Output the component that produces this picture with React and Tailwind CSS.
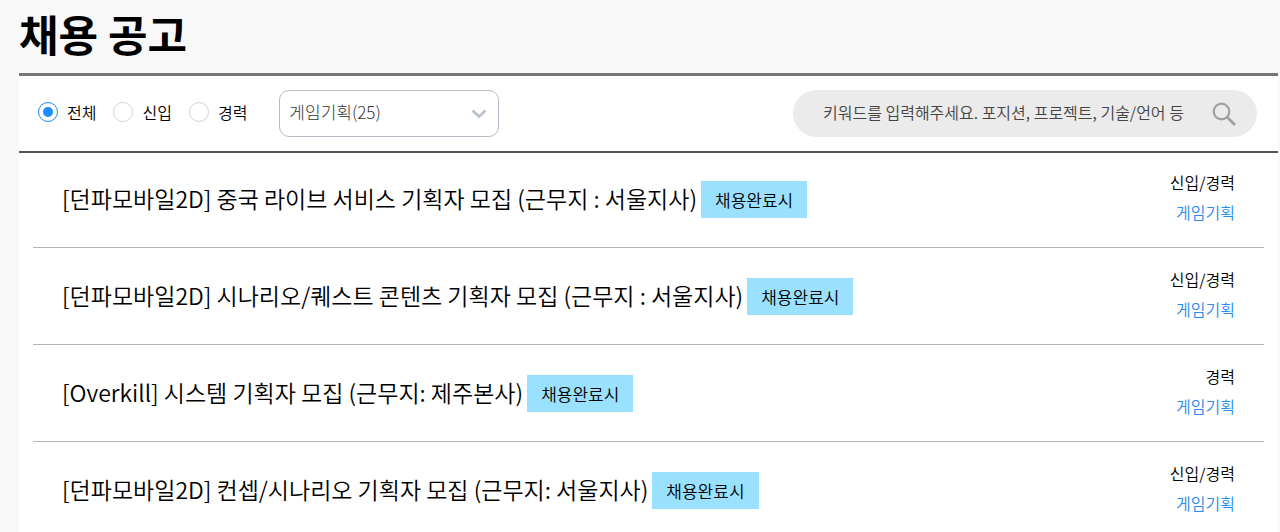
import { useState } from "react";

const careers = ["전체", "신입", "경력"];

const jobs = [
  { title: "[던파모바일2D] 중국 라이브 서비스 기획자 모집 (근무지 : 서울지사)", career: "신입/경력" },
  { title: "[던파모바일2D] 시나리오/퀘스트 콘텐츠 기획자 모집 (근무지 : 서울지사)", career: "신입/경력" },
  { title: "[Overkill] 시스템 기획자 모집 (근무지: 제주본사)", career: "경력" },
  { title: "[던파모바일2D] 컨셉/시나리오 기획자 모집 (근무지: 서울지사)", career: "신입/경력" },
];

function CareerFilter() {
  const [career, setCareer] = useState("전체");
  return (
    <div role="radiogroup" aria-label="경력 구분" className="flex items-center gap-[17px] pb-1">
      {careers.map((name) => (
        <label key={name} className="flex items-center gap-[9px] text-[16px] leading-6">
          <input
            type="radio"
            name="career"
            value={name}
            checked={career === name}
            onChange={() => setCareer(name)}
            className="grid size-[20px] appearance-none place-items-center rounded-full border border-[#d4d4d8] bg-white before:size-[10px] before:rounded-full before:content-[''] checked:border-[#1a86f5] checked:before:bg-[#1a8cff]"
          />
          {name}
        </label>
      ))}
    </div>
  );
}

function JobRow({ job }) {
  return (
    <li className="flex items-center justify-between border-b border-[#b3b3b3] pt-4 pr-[29px] pb-[15px] pl-[29px] first:pt-[14px]">
      <div className="flex items-center gap-1">
        <a href="#job" className="pb-1 text-[23px] leading-8">{job.title}</a>
        <span className="bg-[#99e1ff] px-[14px] py-[6px] text-[17px] leading-[25px]">채용완료시</span>
      </div>
      <div className="pb-[5px] text-right text-[16px] leading-[30px]">
        <p>{job.career}</p>
        <p className="text-[#2a8cf0]">게임기획</p>
      </div>
    </li>
  );
}

export default function App() {
  return (
    <main className="min-h-screen bg-[#f8f8f8] pr-[2px] pl-[19px] font-['Noto_Sans_CJK_KR',sans-serif] font-[350] text-black">
      <h1 className="flex h-[73px] items-center pb-2 text-[43px] leading-[60px] font-bold">채용 공고</h1>
      <section className="min-h-[459px] border-t-[3px] border-[#777] bg-white">
        <div className="flex items-center justify-between border-b-2 border-[#555] pt-[14px] pr-[21px] pb-[14px] pl-[19px]">
          <div className="flex items-center gap-8">
            <CareerFilter />
            <div className="relative flex items-center">
              <select
                aria-label="직무"
                className="h-[47px] w-[220px] appearance-none rounded-[10px] border border-[#b4bcc8] bg-white pr-9 pb-1 pl-[9px] text-[17px] font-light text-[#333]"
              >
                <option>게임기획(25)</option>
              </select>
              <svg className="pointer-events-none absolute right-3 h-[10px] w-[16px]" viewBox="0 0 16 10" fill="none" stroke="#bcc5ce" strokeWidth="3">
                <path d="M1.5 1.5 8 7.5 14.5 1.5" />
              </svg>
            </div>
          </div>
          <form className="flex h-[47px] w-[464px] items-center rounded-full bg-[#ebebeb] pr-[21px] pl-[30px]" onSubmit={(e) => e.preventDefault()}>
            <input
              type="text"
              aria-label="키워드"
              placeholder="키워드를 입력해주세요. 포지션, 프로젝트, 기술/언어 등"
              className="min-w-0 flex-1 bg-transparent pb-[3px] text-[16px] text-[#444] outline-none placeholder:text-[#444]"
            />
            <button type="submit" aria-label="검색">
              <svg className="size-[24px]" viewBox="0 0 24 24" fill="none" stroke="#a0a0a0" strokeWidth="2.2">
                <circle cx="9.5" cy="9.5" r="7.8" />
                <path d="M15 15 23 23" strokeWidth="2.8" />
              </svg>
            </button>
          </form>
        </div>
        <ul className="pr-[14px] pl-[14px]">
          {jobs.map((job) => (
            <JobRow key={job.title} job={job} />
          ))}
        </ul>
      </section>
    </main>
  );
}
